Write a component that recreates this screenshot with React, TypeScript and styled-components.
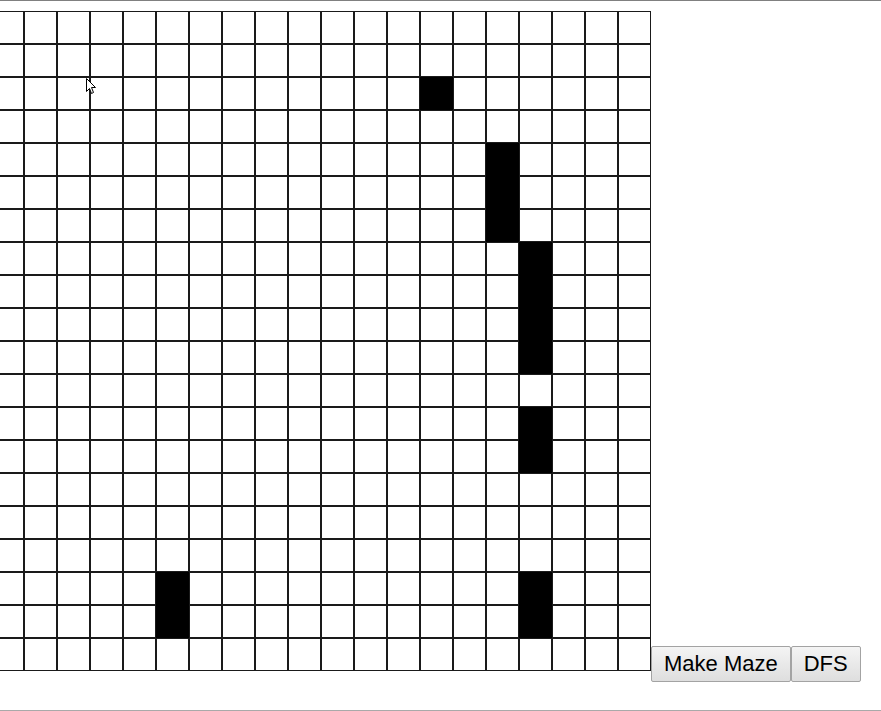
import React from "react";
import styled, { createGlobalStyle } from "styled-components";

const GlobalStyle = createGlobalStyle`
  html, body { margin: 0; padding: 0; background: #ffffff; }
  body { font-family: "Liberation Sans", Arial, sans-serif; }
`;

const ROWS = 20;
const COLS = 20;
const CELL = 33;

const walls: Array<[number, number]> = [
  [2, 13],
  [4, 15], [5, 15], [6, 15],
  [7, 16], [8, 16], [9, 16], [10, 16],
  [12, 16], [13, 16],
  [17, 16], [18, 16],
  [17, 5], [18, 5],
];

const wallSet = new Set(walls.map(([r, c]) => `${r}-${c}`));

const Page = styled.div`
  position: relative;
  box-sizing: border-box;
  height: 711px;
  border-top: 1px solid #808080;
  border-bottom: 1px solid #a9a9a9;
  padding-top: 10px;
  overflow: hidden;
`;

const Row = styled.div`
  display: flex;
  align-items: flex-end;
`;

const Board = styled.div`
  display: grid;
  grid-template-columns: repeat(${COLS}, ${CELL}px);
  grid-auto-rows: ${CELL}px;
  margin-left: -9px;
  flex: none;
`;

const Cell = styled.div<{ $wall: boolean }>`
  box-sizing: border-box;
  width: ${CELL}px;
  height: ${CELL}px;
  border: 1px solid ${(p) => (p.$wall ? "#000000" : "#1a1a1a")};
  background: ${(p) => (p.$wall ? "#000000" : "#ffffff")};
`;

const Controls = styled.div`
  display: flex;
  margin-bottom: -11px;
`;

const Button = styled.button`
  box-sizing: border-box;
  height: 36px;
  padding: 0 12px;
  border: 1px solid #a3a3a3;
  border-radius: 2px;
  background: linear-gradient(#f4f4f4, #dedede);
  color: #000000;
  font-family: "Liberation Sans", Arial, sans-serif;
  font-size: 22px;
  line-height: 24px;
  cursor: pointer;
`;

const Pointer = styled.svg`
  position: absolute;
  left: 86px;
  top: 77px;
  pointer-events: none;
`;

export default function App() {
  const cells = [];
  for (let r = 0; r < ROWS; r++) {
    for (let c = 0; c < COLS; c++) {
      cells.push(<Cell key={`${r}-${c}`} $wall={wallSet.has(`${r}-${c}`)} />);
    }
  }
  return (
    <>
      <GlobalStyle />
      <Page>
        <Row>
          <Board>{cells}</Board>
          <Controls>
            <Button>Make Maze</Button>
            <Button>DFS</Button>
          </Controls>
        </Row>
        <Pointer width="12" height="18" viewBox="0 0 12 18">
          <path
            d="M0.5 0.5 L0.5 13.5 L3.5 10.5 L5.5 15.5 L7.5 14.5 L5.5 9.5 L9.5 9.5 Z"
            fill="#ffffff"
            stroke="#000000"
            strokeWidth="1"
          />
        </Pointer>
      </Page>
    </>
  );
}
